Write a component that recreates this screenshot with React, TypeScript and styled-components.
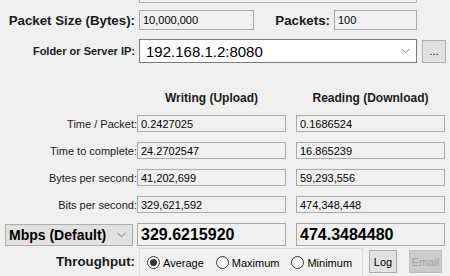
import React, { useState } from "react";
import styled, { createGlobalStyle } from "styled-components";

const GlobalStyle = createGlobalStyle`
  html, body {
    margin: 0;
    padding: 0;
    background: #f0f0f0;
  }
  body {
    font-family: "Liberation Sans", Arial, sans-serif;
    color: #000;
  }
`;

const Window = styled.div`
  width: 450px;
  height: 276px;
  overflow: hidden;
  background: #f0f0f0;
`;

const TopBox = styled.div`
  margin-left: 139px;
  width: 276px;
  height: 3px;
  border: 1px solid #adadad;
  border-top: none;
  margin-top: -1px;
`;

const Row = styled.div<{ $top: number; $height: number }>`
  display: flex;
  align-items: center;
  margin-top: ${(p) => p.$top}px;
  height: ${(p) => p.$height}px;
`;

const BigLabel = styled.div<{ $width: number; $size: number }>`
  width: ${(p) => p.$width}px;
  text-align: right;
  font-weight: bold;
  font-size: ${(p) => p.$size}px;
  padding-right: 4px;
  box-sizing: border-box;
  white-space: nowrap;
  color: #1a1a1a;
`;

const Field = styled.div<{ $width: number; $height: number; $size?: number; $bold?: boolean }>`
  width: ${(p) => p.$width}px;
  height: ${(p) => p.$height}px;
  box-sizing: border-box;
  border: 1px solid #a8a8a8;
  background: #f0f0f0;
  display: flex;
  align-items: center;
  padding-left: 3px;
  font-size: ${(p) => p.$size ?? 11}px;
  font-weight: ${(p) => (p.$bold ? "bold" : "normal")};
  white-space: nowrap;
  overflow: hidden;
`;

const Combo = styled.div`
  width: 278px;
  height: 24px;
  box-sizing: border-box;
  border: 1px solid #7a7a7a;
  background: #fff;
  display: flex;
  align-items: center;
  justify-content: space-between;
  padding: 0 6px 0 6px;
  font-size: 15px;
`;

const Chevron = () => (
  <svg width="9" height="6" viewBox="0 0 9 6">
    <path d="M0.5 0.8 L4.5 4.8 L8.5 0.8" fill="none" stroke="#707070" strokeWidth="1" />
  </svg>
);

const Button = styled.button<{ $disabled?: boolean }>`
  box-sizing: border-box;
  height: 23px;
  border: 1px solid ${(p) => (p.$disabled ? "#bfbfbf" : "#adadad")};
  background: ${(p) => (p.$disabled ? "#cccccc" : "#e1e1e1")};
  color: ${(p) => (p.$disabled ? "#a0a0a0" : "#000")};
  font-family: "Liberation Sans", Arial, sans-serif;
  font-size: 11px;
  padding: 0;
  display: flex;
  align-items: center;
  justify-content: center;
`;

const Headers = styled.div`
  display: grid;
  grid-template-columns: 137px 159px 149px;
  margin-top: 28px;
  font-size: 12px;
  line-height: 14px;
  font-weight: bold;
  color: #1a1a1a;
`;

const HeaderCell = styled.div`
  width: 149px;
  text-align: center;
`;

const DataGrid = styled.div`
  display: grid;
  grid-template-columns: 137px 159px 149px;
  row-gap: 10px;
  margin-top: 10px;
`;

const RowLabel = styled.div`
  font-size: 11px;
  text-align: right;
  align-self: center;
  white-space: nowrap;
  color: #1a1a1a;
`;

const UnitSelect = styled.div`
  margin-left: 5px;
  width: 128px;
  height: 22px;
  box-sizing: border-box;
  border: 1px solid #adadad;
  background: #e1e1e1;
  display: flex;
  align-items: center;
  justify-content: space-between;
  padding: 0 6px 0 3px;
  font-size: 14px;
  font-weight: bold;
  align-self: center;
`;

const ThroughputRow = styled.div`
  display: flex;
  align-items: flex-start;
  margin-top: 2px;
`;

const Group = styled.div`
  width: 224px;
  height: 30px;
  box-sizing: border-box;
  border: 1px solid #dcdcdc;
  border-bottom: none;
  display: flex;
  align-items: flex-start;
  padding: 7px 0 0 7px;
  gap: 12px;
`;

const RadioItem = styled.label`
  display: flex;
  align-items: center;
  gap: 3px;
  font-size: 11px;
`;

const RadioCircle = styled.span<{ $checked: boolean }>`
  width: 13px;
  height: 13px;
  box-sizing: border-box;
  border-radius: 50%;
  border: 1px solid #333;
  background: #fff;
  display: flex;
  align-items: center;
  justify-content: center;
  &::after {
    content: "";
    width: 7px;
    height: 7px;
    border-radius: 50%;
    background: ${(p) => (p.$checked ? "#333" : "transparent")};
  }
`;

const rows = [
  { label: "Time / Packet:", up: "0.2427025", down: "0.1686524" },
  { label: "Time to complete:", up: "24.2702547", down: "16.865239" },
  { label: "Bytes per second:", up: "41,202,699", down: "59,293,556" },
  { label: "Bits per second:", up: "329,621,592", down: "474,348,448" },
];

const App: React.FC = () => {
  const [mode, setMode] = useState("Average");

  return (
    <>
      <GlobalStyle />
      <Window>
        <TopBox />
        <Row $top={7} $height={20}>
          <BigLabel $width={139} $size={13.3}>Packet Size (Bytes):</BigLabel>
          <Field $width={115} $height={20}>10,000,000</Field>
          <BigLabel $width={80} $size={13.3}>Packets:</BigLabel>
          <Field $width={83} $height={20}>100</Field>
        </Row>
        <Row $top={9} $height={24}>
          <BigLabel $width={139} $size={11}>Folder or Server IP:</BigLabel>
          <Combo>
            <span>192.168.1.2:8080</span>
            <Chevron />
          </Combo>
          <Button style={{ width: 24, marginLeft: 5 }}>...</Button>
        </Row>
        <Headers>
          <div />
          <HeaderCell>Writing (Upload)</HeaderCell>
          <HeaderCell>Reading (Download)</HeaderCell>
        </Headers>
        <DataGrid>
          {rows.map((r) => (
            <React.Fragment key={r.label}>
              <RowLabel>{r.label}</RowLabel>
              <Field $width={149} $height={17}>{r.up}</Field>
              <Field $width={149} $height={17}>{r.down}</Field>
            </React.Fragment>
          ))}
          <UnitSelect>
            <span>Mbps (Default)</span>
            <Chevron />
          </UnitSelect>
          <Field $width={149} $height={23} $size={16} $bold>329.6215920</Field>
          <Field $width={149} $height={23} $size={16} $bold>474.3484480</Field>
        </DataGrid>
        <ThroughputRow>
          <BigLabel $width={139} $size={13.3} style={{ marginTop: 6 }}>Throughput:</BigLabel>
          <Group>
            {["Average", "Maximum", "Minimum"].map((m) => (
              <RadioItem key={m} onClick={() => setMode(m)}>
                <RadioCircle $checked={mode === m} />
                {m}
              </RadioItem>
            ))}
          </Group>
          <Button style={{ width: 28, marginLeft: 6, marginTop: 2 }}>Log</Button>
          <Button $disabled style={{ width: 33, marginLeft: 12, marginTop: 2 }}>Email</Button>
        </ThroughputRow>
      </Window>
    </>
  );
};

export default App;
